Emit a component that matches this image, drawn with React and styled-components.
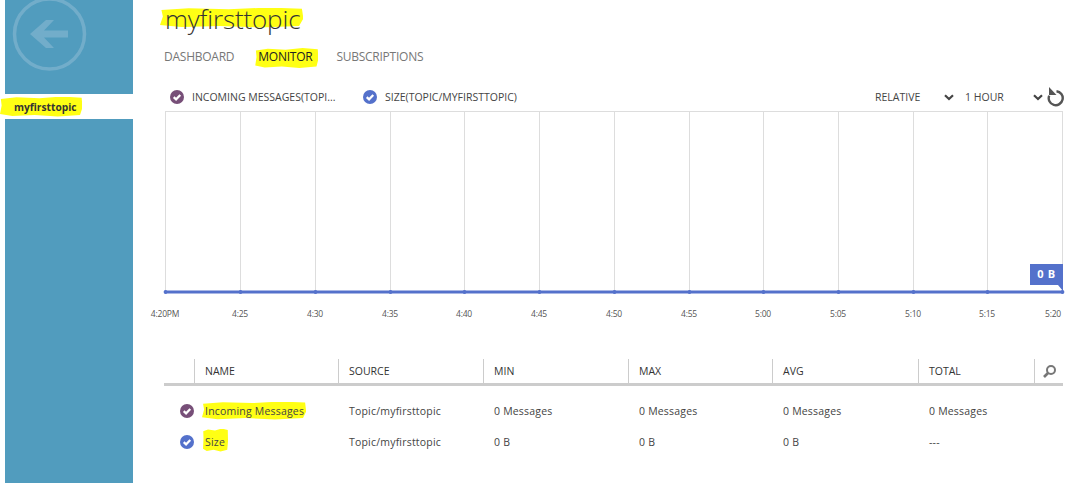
import React from "react";
import styled, { createGlobalStyle } from "styled-components";

const Global = createGlobalStyle`
  html, body { margin: 0; padding: 0; background: #fff; }
  body { font-family: "Open Sans", "Liberation Sans", sans-serif; }
`;
const Page = styled.div`
  display: flex; width: 1078px; height: 483px; overflow: hidden; background: #fff;
`;
const Sidebar = styled.aside`
  width: 128px; margin-left: 5px; flex: none; display: flex; flex-direction: column;
`;
const BackTile = styled.div`
  height: 94px; background: #519cbe; display: flex; padding-left: 8px; box-sizing: border-box; overflow: hidden;
`;
const BackIcon = styled.svg`overflow: visible;`;
const SideItem = styled.div`
  height: 25px; margin-left: -5px; display: flex; align-items: center; padding-left: 14px;
  font-size: 10.2px; font-weight: 700; color: #333;
`;
const SideFill = styled.div`flex: 1; background: #519cbe;`;
const Marker = styled.span`
  position: relative; isolation: isolate;
  &::before {
    content: ""; position: absolute; z-index: -1; inset: ${p => p.$inset};
    background: #ffff14;
    clip-path: polygon(1% 12%, 20% 4%, 48% 9%, 75% 0, 99% 6%, 100% 55%, 97% 92%, 70% 100%, 42% 92%, 15% 98%, 0 88%, 2% 45%);
  }
`;
const Main = styled.main`
  flex: 1; padding-left: 31px; min-width: 0; display: flex; flex-direction: column;
`;
const Title = styled.h1`
  margin: 0; height: 37px; display: flex; align-items: center; padding-left: 1px;
  font-size: 26px; line-height: 36px; font-weight: 300; letter-spacing: -0.15px; color: #333;
`;
const Tabs = styled.nav`
  display: flex; gap: 24px; margin-top: 11px; height: 17px; align-items: center;
`;
const Tab = styled.span`
  font-size: 12px; letter-spacing: -0.25px; color: ${p => (p.$active ? "#222" : "#777")};
`;
const Legend = styled.div`
  display: flex; align-items: center; height: 18px; margin-top: 23px; padding-left: 6px;
  font-size: 10.5px; color: #444;
`;
const LegendItem = styled.div`
  display: flex; align-items: center; gap: 8px; width: ${p => p.$w}px; flex: none;
  white-space: nowrap;
  svg { flex: none; }
`;
const Controls = styled.div`
  margin-left: auto; display: flex; align-items: center; padding-right: 14px;
`;
const Select = styled.div`
  display: flex; align-items: center; justify-content: space-between;
  width: ${p => p.$w}px; margin-right: ${p => p.$gap}px;
`;
const Chart = styled.svg`
  display: block; margin: 5px 0 0 -16px; flex: none;
`;
const AxisText = styled.text`
  font-size: 8.5px; fill: #555; text-anchor: middle; letter-spacing: -0.2px;
`;
const Table = styled.div`
  margin-top: 34px; width: 899px; font-size: 10.5px; color: #444;
`;
const Grid = styled.div`
  display: grid; grid-template-columns: 30px 144px 145px 145px 144px 146px 116px 29px;
`;
const HeadRow = styled(Grid)`
  height: 24px; border-bottom: 3px solid #ccc; align-items: stretch;
`;
const HeadCell = styled.div`
  border-left: ${p => (p.$first ? "none" : "1px solid #ccc")};
  padding-left: 10px; display: flex; align-items: center; color: #333;
`;
const SearchCell = styled(HeadCell)`padding-left: 7px;`;
const Row = styled(Grid)`
  height: 31px; align-items: center;
`;
const Body = styled.div`margin-top: 9px;`;
const Cell = styled.div`padding-left: 11px; white-space: nowrap; letter-spacing: 0.2px;`;
const CheckCell = styled.div`padding-left: 16px; display: flex;`;

const Check = ({ color }) => (
  <svg width="14" height="14" viewBox="0 0 15 15">
    <circle cx="7.5" cy="7.5" r="7.5" fill={color} />
    <path d="M4 7.6 L6.5 10 L11 5.4" fill="none" stroke="#fff" strokeWidth="2.4" />
  </svg>
);
const Chevron = () => (
  <svg width="10" height="7" viewBox="0 0 10 7">
    <path d="M1 1.2 L5 5 L9 1.2" fill="none" stroke="#444" strokeWidth="2.2" />
  </svg>
);

const xs = [1, 76, 151, 226, 300, 375, 450, 525, 599, 674, 749, 823, 898];
const labels = ["4:20PM", "4:25", "4:30", "4:35", "4:40", "4:45", "4:50", "4:55", "5:00", "5:05", "5:10", "5:15", "5:20"];

export default function App() {
  return (
    <Page>
      <Global />
      <Sidebar>
        <BackTile>
          <BackIcon width="74" height="74" viewBox="0 0 74 74">
            <circle cx="36.5" cy="34" r="35" fill="none" stroke="#72adca" strokeWidth="3.5" />
            <path d="M17 34 L33 20 H41 L31 30.5 H55 V37.5 H31 L41 48 H33 Z" fill="#72adca" />
          </BackIcon>
        </BackTile>
        <SideItem><Marker $inset="-3px -6px -3px -14px">myfirsttopic</Marker></SideItem>
        <SideFill />
      </Sidebar>
      <Main>
        <Title><Marker $inset="7px -3px 9px -5px">myfirsttopic</Marker></Title>
        <Tabs>
          <Tab>DASHBOARD</Tab>
          <Tab $active><Marker $inset="0 -6px -3px -3px">MONITOR</Marker></Tab>
          <Tab>SUBSCRIPTIONS</Tab>
        </Tabs>
        <Legend>
          <LegendItem $w={193}><Check color="#774f78" />INCOMING MESSAGES(TOPI...</LegendItem>
          <LegendItem $w={165}><Check color="#5471cb" />SIZE(TOPIC/MYFIRSTTOPIC)</LegendItem>
          <Controls>
            <Select $w={79} $gap={11}>RELATIVE<Chevron /></Select>
            <Select $w={78} $gap={4}>1 HOUR<Chevron /></Select>
            <svg width="17" height="20" viewBox="0 0 17 20">
              <path d="M9.5 4.2 A7 7 0 1 1 2.2 8.6" fill="none" stroke="#555" strokeWidth="2.4" />
              <path d="M2 0 V8 H9.5 Z" fill="#555" />
            </svg>
          </Controls>
        </Legend>
        <Chart width="930" height="214" viewBox="-16 0 930 214">
          <line x1="1" x2="898" y1="0.5" y2="0.5" stroke="#ddd" />
          {xs.map(x => <line key={x} x1={x + 0.5} x2={x + 0.5} y1="0" y2="181" stroke="#ddd" />)}
          <line x1="1" x2="899" y1="181" y2="181" stroke="#5471cb" strokeWidth="3" />
          {xs.map(x => <circle key={x} cx={x + 0.5} cy="181" r="1.9" fill="#5471cb" />)}
          <path d="M866 153 H899 V180 L894 174 H866 Z" fill="#5471cb" />
          <text x="882.5" y="167" fontSize="11" fontWeight="700" fill="#fff" textAnchor="middle" letterSpacing="0.6">0 B</text>
          {xs.map((x, i) => (
            <AxisText key={x} x={i === 12 ? 889 : x} y="206">{labels[i]}</AxisText>
          ))}
        </Chart>
        <Table>
          <HeadRow>
            <HeadCell $first />
            <HeadCell>NAME</HeadCell>
            <HeadCell>SOURCE</HeadCell>
            <HeadCell>MIN</HeadCell>
            <HeadCell>MAX</HeadCell>
            <HeadCell>AVG</HeadCell>
            <HeadCell>TOTAL</HeadCell>
            <SearchCell>
              <svg width="15" height="15" viewBox="0 0 15 15">
                <circle cx="9" cy="6" r="4" fill="none" stroke="#777" strokeWidth="2" />
                <path d="M6 9 L2 13" stroke="#777" strokeWidth="2.6" />
              </svg>
            </SearchCell>
          </HeadRow>
          <Body>
            <Row>
              <CheckCell><Check color="#774f78" /></CheckCell>
              <Cell><Marker $inset="-2px -2px -2px -3px">Incoming Messages</Marker></Cell>
              <Cell>Topic/myfirsttopic</Cell>
              <Cell>0 Messages</Cell>
              <Cell>0 Messages</Cell>
              <Cell>0 Messages</Cell>
              <Cell>0 Messages</Cell>
              <Cell />
            </Row>
            <Row>
              <CheckCell><Check color="#5471cb" /></CheckCell>
              <Cell><Marker $inset="-6px -3px -3px -2px">Size</Marker></Cell>
              <Cell>Topic/myfirsttopic</Cell>
              <Cell>0 B</Cell>
              <Cell>0 B</Cell>
              <Cell>0 B</Cell>
              <Cell>---</Cell>
              <Cell />
            </Row>
          </Body>
        </Table>
      </Main>
    </Page>
  );
}
